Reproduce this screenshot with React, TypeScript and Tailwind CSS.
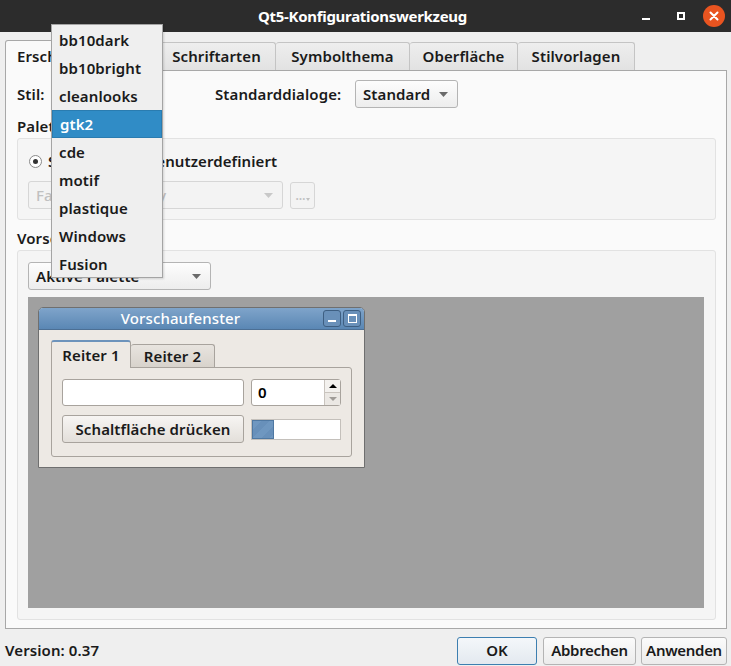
import React from 'react'

const styles = ['bb10dark', 'bb10bright', 'cleanlooks', 'gtk2', 'cde', 'motif', 'plastique', 'Windows', 'Fusion']

function Arrow({ className = '' }: { className?: string }) {
  return (
    <svg width="9" height="5" viewBox="0 0 9 5" className={className}>
      <path d="M0 0 L9 0 L4.5 5 Z" fill="currentColor" />
    </svg>
  )
}

function Combo({ label, className = '', disabled = false }: { label: string; className?: string; disabled?: boolean }) {
  return (
    <div
      className={`h-[28px] flex items-center justify-between pl-[7px] pr-[9px] rounded-[3px] border ${
        disabled
          ? 'border-[#d6d6d6] bg-[#f3f3f3] text-[#c0c0c0]'
          : 'border-[#b4b4b4] bg-gradient-to-b from-[#fdfdfd] to-[#ededed] text-[#1a1a1a]'
      } ${className}`}
    >
      <span className="whitespace-nowrap">{label}</span>
      <Arrow className={disabled ? 'text-[#c8c8c8]' : 'text-[#6a6a6a]'} />
    </div>
  )
}

export default function App() {
  return (
    <div
      className="w-[731px] h-[666px] bg-[#efefef] flex flex-col overflow-hidden relative text-[15px] font-semibold text-[#1a1a1a] tracking-[0.1px]"
      style={{ fontFamily: '"Noto Sans", "DejaVu Sans", sans-serif' }}
    >
      {/* Title bar */}
      <div className="h-[32px] bg-[#2c2c2c] flex items-center relative shrink-0">
        <div className="flex-1 text-center text-white font-bold text-[15px] tracking-[-0.3px] pr-[6px]">Qt5-Konfigurationswerkzeug</div>
        <div className="absolute right-[6px] top-0 h-[32px] flex items-center">
          <div className="w-[30px] flex justify-center">
            <div className="w-[8px] h-[2px] bg-white mt-[6px]" />
          </div>
          <div className="w-[40px] flex justify-center">
            <div className="w-[8px] h-[8px] border-2 border-white" />
          </div>
          <div className="w-[22px] h-[22px] rounded-full bg-[#e95420] flex items-center justify-center ml-[2px]">
            <svg width="10" height="10" viewBox="0 0 10 10">
              <path d="M1.5 1.5 L8.5 8.5 M8.5 1.5 L1.5 8.5" stroke="white" strokeWidth="2" strokeLinecap="round" />
            </svg>
          </div>
        </div>
      </div>

      {/* Tabs */}
      <div className="pl-[5px] pr-[4px] mt-[8px]">
        <div className="flex items-end h-[30px]">
          <div className="w-[153px] h-[31px] bg-[#fafafa] border border-b-0 border-[#a8a8a8] rounded-t-[3px] flex items-center pl-[11px] relative z-10 -mb-px">
            Erscheinungsbild
          </div>
          {[
            ['Schriftarten', 'w-[118px]'],
            ['Symbolthema', 'w-[134px]'],
            ['Oberfläche', 'w-[108px]'],
            ['Stilvorlagen', 'w-[117px]'],
          ].map(([t, w]) => (
            <div
              key={t}
              className={`${w} h-[28px] bg-gradient-to-b from-[#eeeeee] to-[#e2e2e2] border border-l-0 border-b-0 border-[#c4c4c4] rounded-t-[3px] flex items-center justify-center`}
            >
              {t}
            </div>
          ))}
        </div>

        {/* Pane */}
        <div className="h-[559px] bg-[#fafafa] border border-[#a8a8a8] pl-[11px] pt-[9px]">
          <div className="flex items-center h-[28px]">
            <span className="w-[34px]">Stil:</span>
            <Combo label="gtk2" className="w-[112px]" />
            <span className="ml-[52px] w-[140px]">Standarddialoge:</span>
            <Combo label="Standard" className="w-[103px]" />
          </div>

          <div className="h-[30px] flex items-center pt-[6px]">Palette</div>
          <div className="w-[699px] h-[82px] bg-[#f5f5f5] border border-[#e2e2e2] rounded-[3px] pl-[11px] pt-[11px]">
            <div className="flex items-center h-[22px]">
              <div className="w-[13px] h-[13px] rounded-full border border-[#8a8a8a] bg-white flex items-center justify-center">
                <div className="w-[5px] h-[5px] rounded-full bg-[#333]" />
              </div>
              <span className="ml-[6px]">Standard</span>
              <div className="ml-[14px] w-[13px] h-[13px] rounded-full border border-[#8a8a8a] bg-white" />
              <span className="ml-[4px]">Benutzerdefiniert</span>
            </div>
            <div className="flex items-center mt-[9px] -ml-px">
              <Combo label="Farbschema: Grey" disabled className="w-[255px] font-medium" />
              <div className="ml-[7px] w-[25px] h-[27px] rounded-[3px] border border-[#d6d6d6] bg-[#f3f3f3] flex items-center justify-center">
                <span className="text-[12px] leading-none text-[#c0c0c0] mt-[2px]">…</span>
                <svg width="4" height="3" viewBox="0 0 4 3" className="mt-[8px]">
                  <path d="M0 0 L4 0 L2 3 Z" fill="#c0c0c0" />
                </svg>
              </div>
            </div>
          </div>

          <div className="h-[30px] flex items-center pt-[6px]">Vorschau</div>
          <div className="w-[699px] h-[370px] bg-[#f5f5f5] border border-[#e2e2e2] rounded-[3px] pl-[10px] pt-[11px]">
            <Combo label="Aktive Palette" className="w-[183px]" />
            <div className="mt-[7px] w-[676px] h-[311px] bg-[#a0a0a0] pl-[10px] pt-[10px]">
              {/* Preview window */}
              <div className="w-[327px] h-[161px] bg-[#ede9e4] border border-[#6f6f6f] rounded-t-[5px] flex flex-col">
                <div className="h-[22px] bg-gradient-to-b from-[#7fa4ca] to-[#5a87b4] rounded-t-[4px] flex items-center relative border-b border-[#4c6f94]">
                  <div className="flex-1 text-center text-white font-medium pr-[42px]">Vorschaufenster</div>
                  <div className="absolute right-[3px] top-[2px] flex gap-[2px]">
                    <div className="w-[18px] h-[17px] rounded-[3px] border border-[#3e5f82] bg-[#6990b9] flex items-end justify-center pb-[4px]">
                      <div className="w-[8px] h-[2px] bg-white" />
                    </div>
                    <div className="w-[18px] h-[17px] rounded-[3px] border border-[#3e5f82] bg-[#6990b9] flex items-center justify-center">
                      <div className="w-[9px] h-[9px] border border-white border-t-2" />
                    </div>
                  </div>
                </div>
                <div className="pl-[12px] pt-[10px]">
                  <div className="flex items-end h-[27px]">
                    <div className="w-[80px] h-[28px] bg-[#ede9e4] border border-b-0 border-[#a8a39d] border-t-2 border-t-[#6d93bb] rounded-t-[3px] flex items-center justify-center relative z-10 -mb-px">
                      Reiter 1
                    </div>
                    <div className="w-[84px] h-[23px] bg-gradient-to-b from-[#e8e4df] to-[#d8d3cc] border border-l-0 border-b-0 border-[#a8a39d] rounded-t-[3px] flex items-center justify-center">
                      Reiter 2
                    </div>
                  </div>
                  <div className="w-[301px] h-[90px] border border-[#a8a39d] rounded-b-[3px] rounded-tr-[3px] pl-[10px] pt-[11px]">
                    <div className="flex items-center gap-[7px]">
                      <div className="w-[182px] h-[27px] bg-white border border-[#a8a39d] rounded-[3px]" />
                      <div className="w-[90px] h-[27px] bg-white border border-[#a8a39d] rounded-[3px] flex">
                        <div className="flex-1 flex items-center pl-[6px] text-black">0</div>
                        <div className="w-[16px] flex flex-col border-l border-[#c9c4be]">
                          <div className="flex-1 flex items-center justify-center bg-[#f3f1ee]">
                            <svg width="8" height="4" viewBox="0 0 8 4"><path d="M0 4 L8 4 L4 0 Z" fill="#000" /></svg>
                          </div>
                          <div className="flex-1 flex items-center justify-center bg-[#ebe8e4] border-t border-[#c9c4be]">
                            <svg width="8" height="4" viewBox="0 0 8 4"><path d="M0 0 L8 0 L4 4 Z" fill="#a09c98" /></svg>
                          </div>
                        </div>
                      </div>
                    </div>
                    <div className="flex items-center gap-[7px] mt-[9px]">
                      <div className="w-[182px] h-[28px] bg-gradient-to-b from-[#f7f5f3] to-[#e3dfda] border border-[#a8a39d] rounded-[3px] flex items-center justify-center">
                        Schaltfläche drücken
                      </div>
                      <div className="w-[90px] h-[21px] bg-white border border-[#c4c0bb] flex">
                        <div
                          className="w-[22px] h-full border border-[#4f78a2]"
                          style={{ background: 'repeating-linear-gradient(135deg, #6f97c0 0 6px, #6890ba 6px 12px)' }}
                        />
                      </div>
                    </div>
                  </div>
                </div>
              </div>
            </div>
          </div>
        </div>
      </div>

      {/* Bottom bar */}
      <div className="flex items-center pl-[5px] pr-[4px] mt-[8px] h-[27px]">
        <span className="flex-1">Version: 0.37</span>
        <div className="w-[80px] h-[28px] rounded-[3px] border border-[#3d7fb0] bg-gradient-to-b from-[#f4f7fa] to-[#e3e9ef] flex items-center justify-center">OK</div>
        <div className="ml-[6px] w-[93px] h-[28px] rounded-[3px] border border-[#b4b4b4] bg-gradient-to-b from-[#fbfbfb] to-[#ececec] flex items-center justify-center tracking-[-0.3px]">Abbrechen</div>
        <div className="ml-[5px] w-[86px] h-[28px] rounded-[3px] border border-[#b4b4b4] bg-gradient-to-b from-[#fbfbfb] to-[#ececec] flex items-center justify-center tracking-[-0.3px]">Anwenden</div>
      </div>

      {/* Style popup */}
      <div className="absolute z-30 left-[51px] top-[24px] w-[112px] h-[254px] bg-[#efefef] border border-[#a4a4a4] pt-px shadow-[1px_1px_2px_rgba(0,0,0,0.15)]">
        {styles.map((s) => (
          <div
            key={s}
            className={`h-[28px] flex items-center pl-[7px] ${s === 'gtk2' ? 'bg-[#308cc6] text-white border border-[#2a7cb0]' : ''}`}
          >
            {s}
          </div>
        ))}
      </div>
    </div>
  )
}
